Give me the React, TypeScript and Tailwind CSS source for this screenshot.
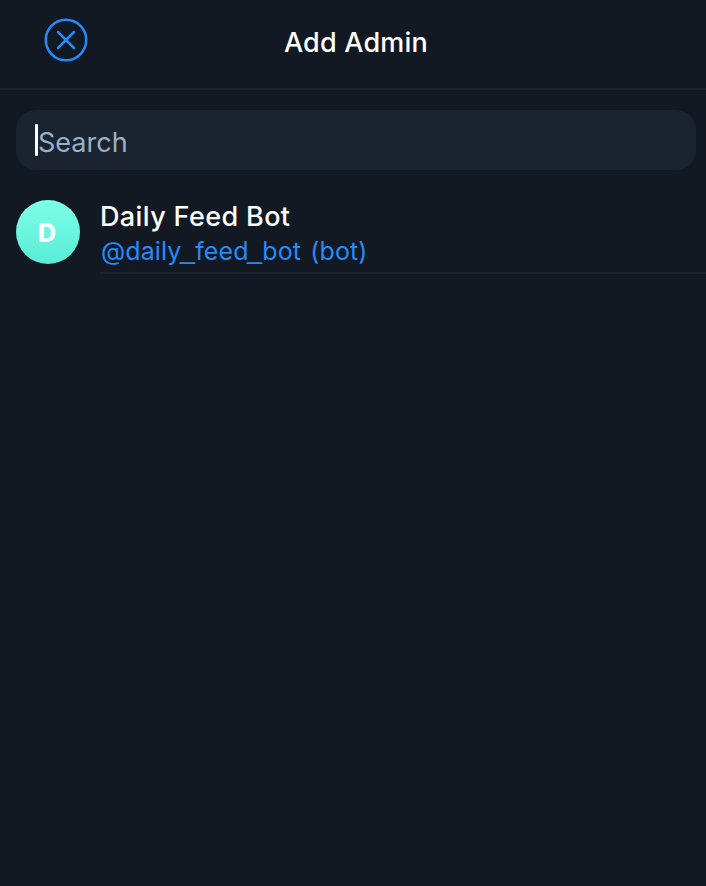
function Underscore() {
  return <span className="-ml-[1.5px] align-[2px] font-['Liberation_Sans',sans-serif] text-[27px] leading-none">_</span>;
}

export default function App() {
  return (
    <div className="flex h-[886px] w-[706px] flex-col overflow-hidden bg-[#121922] font-['Inter','Liberation_Sans',sans-serif] text-white">
      <header className="grid h-[90px] grid-cols-[88px_1fr_82px] border-b-2 border-[#1a2430]">
        <button aria-label="Close" className="mt-[18px] ml-[44px] h-11 w-11">
          <svg width="44" height="44" viewBox="0 0 44 44" fill="none" stroke="#248bfd" strokeWidth="2.5" strokeLinecap="round">
            <circle cx="22" cy="22" r="20.2" />
            <path d="M14 14l16 16M30 14L14 30" />
          </svg>
        </button>
        <h1 className="mt-[25px] text-center text-[27px] leading-9 font-medium tracking-[0.22px] whitespace-nowrap">Add Admin</h1>
      </header>
      <div className="mt-5 mr-[10px] ml-4 flex h-[60px] items-start rounded-[20px] bg-[#192430] pt-[14px] pl-[19px]">
        <span className="h-8 w-[3px] rounded-[1px] bg-white" />
        <span className="mt-px text-[27px] leading-9 text-[#9bb0c7]">Search</span>
      </div>
      <div className="mt-[26px] ml-4 flex h-[78px]">
        <div className="mt-1 flex h-16 w-16 shrink-0 items-center justify-center rounded-full bg-linear-to-b from-[#7dffe8] to-[#57ecd7] pt-0.5 pr-0.5 text-[25.5px] font-extrabold">
          D
        </div>
        <div className="ml-5 flex flex-1 flex-col border-b-2 border-[#1a2430] whitespace-nowrap">
          <span className="mt-[3px] text-[27px] leading-9 font-medium tracking-[0.38px]">Daily Feed Bot</span>
          <span className="-mt-px pl-px text-[25px] leading-[34px] tracking-[0.12px] text-[#248bfd] [word-spacing:2px]">
            @daily<Underscore />feed<Underscore />bot (bot)
          </span>
        </div>
      </div>
    </div>
  );
}
